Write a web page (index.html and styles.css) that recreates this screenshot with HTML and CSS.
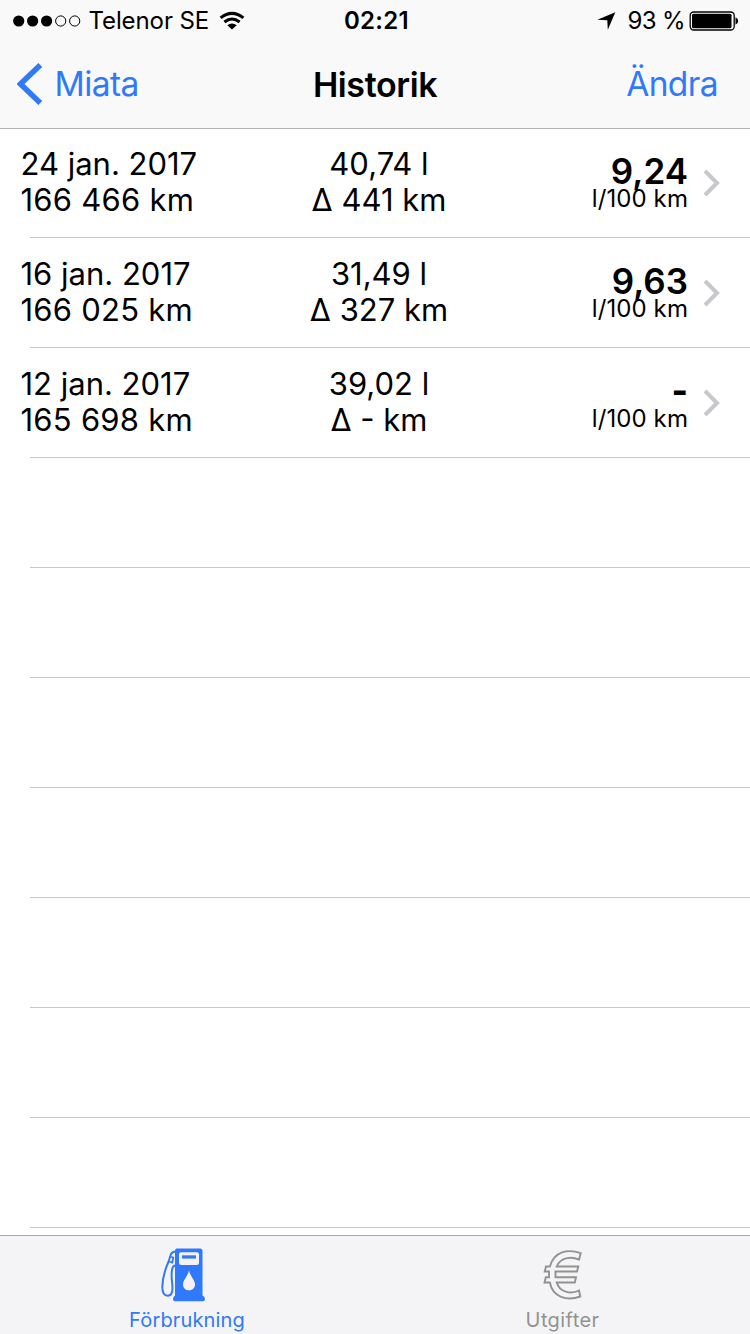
FILE: index.html
```html
<!DOCTYPE html>
<html lang="sv">
<head>
<meta charset="utf-8">
<title>Historik</title>
<link rel="stylesheet" href="styles.css">
</head>
<body>
<div class="screen">
  <header class="header">
    <div class="status">
      <div class="status-left">
        <svg class="signal" width="68" height="12" viewBox="0 0 68 12"><g><circle cx="5.7" cy="6" r="5.6"/><circle cx="19.6" cy="6" r="5.6"/><circle cx="33.6" cy="6" r="5.6"/></g><g fill="none" stroke="#000" stroke-width="1"><circle cx="47.7" cy="6" r="5.1"/><circle cx="61.7" cy="6" r="5.1"/></g></svg>
        <span class="carrier">Telenor SE</span>
        <svg class="wifi" width="26" height="19" viewBox="0 0 26 19"><g fill="none" stroke="#000" stroke-width="3"><path d="M1.600 6.900Q13 -2.200 24.400 6.900"/><path d="M5.400 11Q13 5 20.600 11"/></g><path d="M8.300 14.200Q13 10.800 17.700 14.200L13 18.500Z"/></svg>
      </div>
      <div class="clock">02:21</div>
      <div class="status-right">
        <svg class="location" width="19" height="18" viewBox="0 0 19 18"><path d="M18.300 0.200L10.800 17.700L10.300 8.300L0.400 7.700Z"/></svg>
        <span class="percent">93 %</span>
        <svg class="battery" width="50" height="20" viewBox="0 0 50 20"><rect x="1.200" y="1" width="44" height="18" rx="3.500" fill="#fff" stroke="#000" stroke-width="1.300"/><rect x="3" y="2.700" width="39.500" height="14.600" rx="1.500"/><path d="M46.500 6.200Q49.200 7.200 49.200 10Q49.200 12.800 46.500 13.800Z"/></svg>
      </div>
    </div>
    <nav class="nav">
      <a class="back"><svg class="back-icon" width="26" height="42" viewBox="0 0 26 42"><path d="M23.300 2L3.500 21L23.300 40" fill="none" stroke="#3079fb" stroke-width="5.500"/></svg><span class="back-text">Miata</span></a>
      <h1 class="title">Historik</h1>
      <a class="edit">Ändra</a>
    </nav>
  </header>
  <main class="list">
    <div class="row">
      <div class="date"><div class="d1">24 jan. 2017</div><div class="d2">166 466 km</div></div>
      <div class="amount"><div class="a1">40,74 l</div><div class="a2">Δ 441 km</div></div>
      <div class="usage"><div class="value">9,24</div><div class="unit">l/100 km</div></div>
      <svg class="chevron" width="18" height="28" viewBox="0 0 18 28"><path d="M2 2L14 14L2 26" fill="none" stroke="#c7c7cc" stroke-width="4"/></svg>
    </div>
    <div class="row">
      <div class="date"><div class="d1">16 jan. 2017</div><div class="d2">166 025 km</div></div>
      <div class="amount"><div class="a1">31,49 l</div><div class="a2">Δ 327 km</div></div>
      <div class="usage"><div class="value">9,63</div><div class="unit">l/100 km</div></div>
      <svg class="chevron" width="18" height="28" viewBox="0 0 18 28"><path d="M2 2L14 14L2 26" fill="none" stroke="#c7c7cc" stroke-width="4"/></svg>
    </div>
    <div class="row">
      <div class="date"><div class="d1">12 jan. 2017</div><div class="d2">165 698 km</div></div>
      <div class="amount"><div class="a1">39,02 l</div><div class="a2">Δ - km</div></div>
      <div class="usage"><div class="value empty">-</div><div class="unit">l/100 km</div></div>
      <svg class="chevron" width="18" height="28" viewBox="0 0 18 28"><path d="M2 2L14 14L2 26" fill="none" stroke="#c7c7cc" stroke-width="4"/></svg>
    </div>
    <div class="row"></div>
    <div class="row"></div>
    <div class="row"></div>
    <div class="row"></div>
    <div class="row"></div>
    <div class="row"></div>
    <div class="row"></div>
  </main>
  <footer class="tabs">
    <a class="tab active">
      <svg class="tab-icon pump" width="44" height="54" viewBox="0 0 44 54"><path fill="#3079fb" fill-rule="evenodd" d="M15.500 0.500H39Q41.500 0.500 41.500 3V47.500Q44 48.500 44 51Q44 53.300 42 53.300H14Q12 53.300 12 51Q12 48.500 14 47.500V3Q14 0.500 15.500 0.500ZM20 4.300Q18 4.300 18 6.500V14.500Q18 17 20.500 17H35.500Q38 17 38 14.500V6.500Q38 4.300 36 4.300ZM28 22.500C26.500 29 22 32 22 36.500C22 40 24.700 42.300 28 42.300C31.300 42.300 34 40 34 36.500C34 32 29.500 29 28 22.500Z"/><path fill="#3079fb" d="M21 7.300H35V10.600H21Z"/><g fill="none" stroke="#3079fb"><path stroke-width="2" d="M14.500 3.500Q10 4 9.300 8L7.800 13Q1.500 27 1.300 39C1.300 45 3.500 47.700 6.700 47.700C10.500 47.700 11.500 44 11.500 40C11.500 34 9.700 29 11 22Q11.500 18 14 17.500"/><path stroke-width="1.800" d="M9 8.500L12.300 9.500L11.300 14.500L8 13.500"/></g></svg>
      <span class="tab-text">Förbrukning</span>
    </a>
    <a class="tab">
      <svg class="tab-icon euro" width="40" height="50" viewBox="0 0 40 50"><path fill="none" stroke="#929292" stroke-width="1.900" stroke-linejoin="miter" d="M37.700 3.200L36 9.700C30 6.800 18 6.200 13.700 16.500H35.300L34 21.500H12.500V27.300H33L31.800 32.500H13.700C17 43.500 29 44 36 40.500L37.300 46.500C24 51.500 9.500 47 6.900 32.500H1.500L2.800 27.300H6V21.500H1.700L3 16.500H6.900C11 1.500 25 -1.500 37.700 3.200Z"/></svg>
      <span class="tab-text">Utgifter</span>
    </a>
  </footer>
</div>
</body>
</html>
```
FILE: styles.css
```css
* { box-sizing: border-box; }
body {
  margin: 0;
  background: #fff;
  color: #000;
  font-family: Inter, "Liberation Sans", sans-serif;
}
svg { display: block; flex: none; }
.screen {
  width: 750px;
  height: 1334px;
  display: flex;
  flex-direction: column;
  overflow: hidden;
}
.header {
  height: 129px;
  flex: none;
  background: #f9f9f9;
  border-bottom: 1px solid #b2b2b2;
}
.status, .nav {
  display: grid;
  grid-template-columns: 1fr auto 1fr;
  white-space: nowrap;
}
.status {
  height: 40px;
  padding: 0 11px 0 13px;
  font-size: 24px;
  line-height: 41px;
}
.status-left, .status-right { display: flex; align-items: center; }
.status-right { justify-content: flex-end; }
.carrier { margin-left: 7.5px; letter-spacing: -0.1px; }
.wifi { margin: 0 0 1px 10px; }
.clock { font-weight: 600; letter-spacing: 0.3px; padding-left: 1px; }
.location { margin-right: 11px; }
.percent { margin-right: 4px; letter-spacing: -0.6px; }
.nav {
  height: 88px;
  padding: 0 32px 0 17px;
  font-size: 33.5px;
  line-height: 89px;
}
.back, .edit { color: #3079fb; display: flex; align-items: center; letter-spacing: -0.6px; }
.edit { justify-content: flex-end; }
.back-icon { margin-bottom: 1px; }
.back-text { margin-left: 11.5px; }
.title { margin: 0; padding-left: 15px; font-size: 34px; font-weight: 600; letter-spacing: -0.4px; }
.list { flex: 1; min-height: 0; overflow: hidden; margin-top: -1px; }
.row {
  height: 110px;
  margin-left: 30px;
  padding-right: 29px;
  border-bottom: 1px solid #c8c7cc;
  display: grid;
  grid-template-columns: 230px 238px 1fr 18px;
  font-size: 31px;
  line-height: 36px;
  white-space: nowrap;
}
.date { margin-left: -9.5px; padding-top: 18px; }
.d2 { letter-spacing: 0.25px; }
.amount { padding-top: 18px; text-align: center; }
.usage { padding: 22px 15px 0 0; text-align: right; }
.value { font-size: 35px; font-weight: 600; line-height: 42px; height: 34px; }
.empty { font-weight: 800; line-height: 41px; }
.unit { font-size: 24px; line-height: 30px; letter-spacing: 0.1px; }
.chevron { margin-top: 41px; }
.tabs {
  height: 99px;
  flex: none;
  display: grid;
  grid-template-columns: 1fr 1fr;
  background: #f4f4f6;
  border-top: 1px solid #a9a9ab;
}
.tab {
  color: #929292;
  display: flex;
  flex-direction: column;
  align-items: center;
  font-size: 20px;
  letter-spacing: 0.4px;
}
.active { color: #3079fb; letter-spacing: 0.15px; }
.tab-icon { height: 54px; margin-top: 12px; }
.pump { margin-right: 10px; }
.tab-text { line-height: 24px; margin-top: 6px; }
.active .tab-text { margin-right: 1px; }
```
